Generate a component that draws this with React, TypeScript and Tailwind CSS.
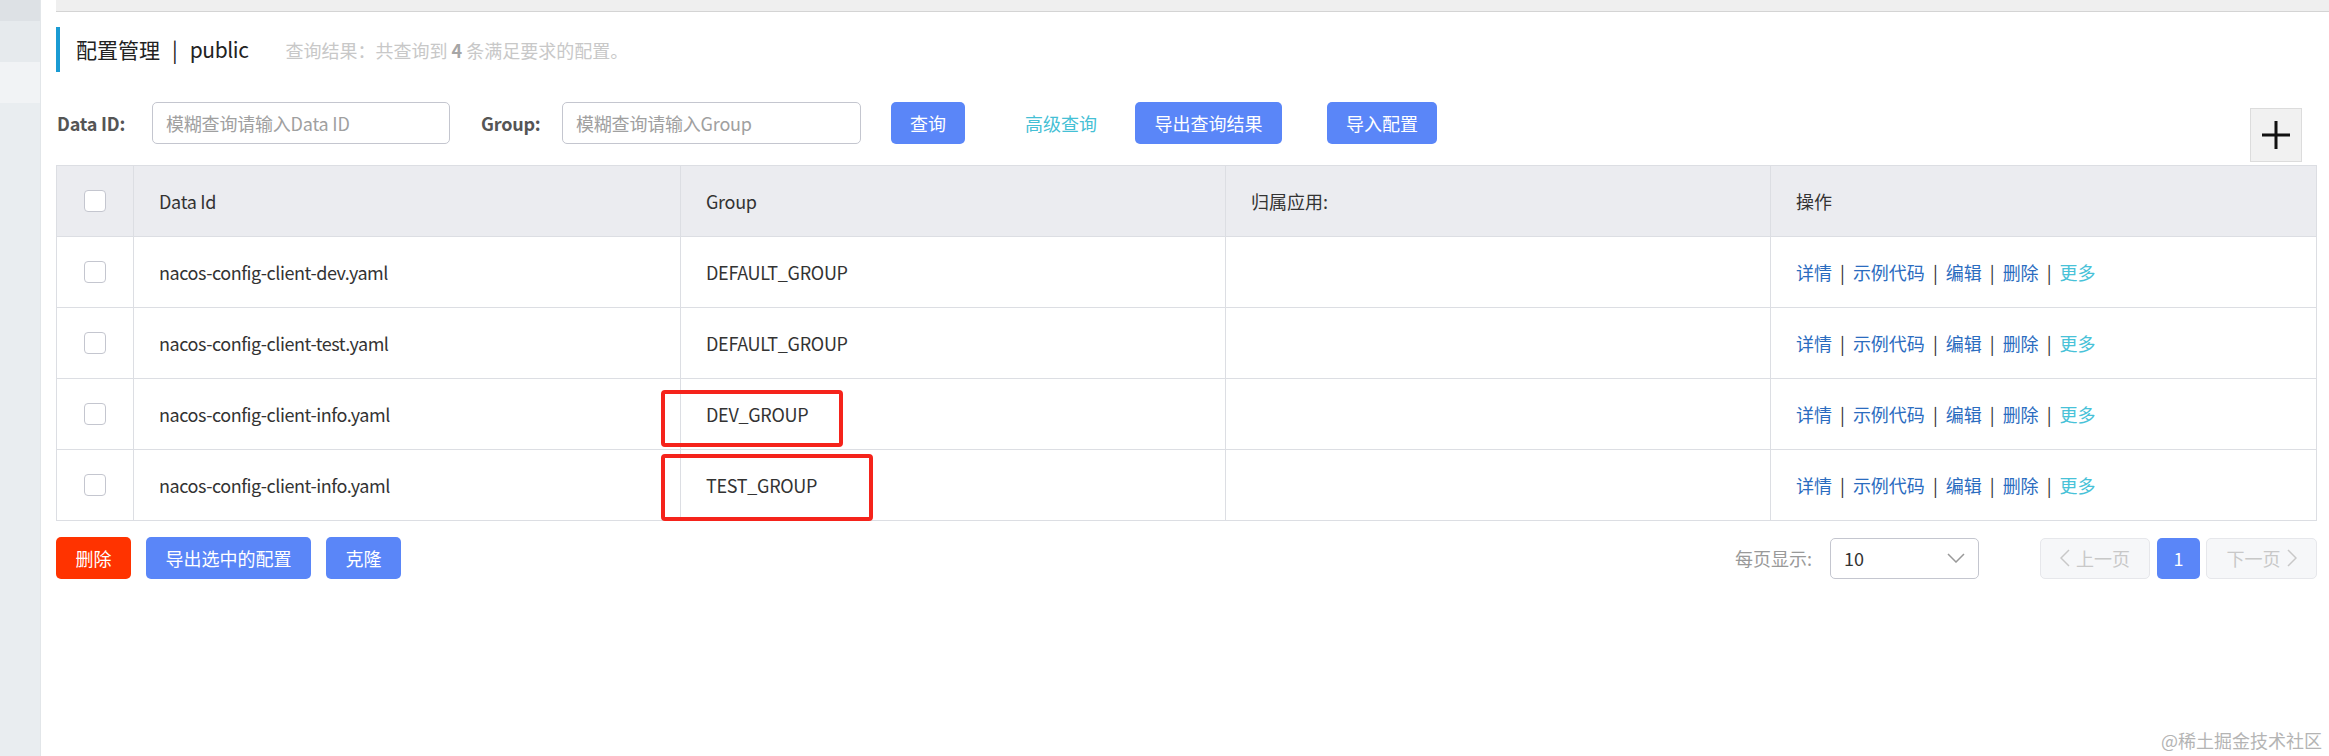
import React from 'react';

const rows = [
  { id: 'nacos-config-client-dev.yaml', group: 'DEFAULT_GROUP' },
  { id: 'nacos-config-client-test.yaml', group: 'DEFAULT_GROUP' },
  { id: 'nacos-config-client-info.yaml', group: 'DEV_GROUP' },
  { id: 'nacos-config-client-info.yaml', group: 'TEST_GROUP' },
];

const Checkbox: React.FC = () => (
  <span className="block w-[22px] h-[22px] rounded-[4px] border border-[#c4c6cf] bg-white"></span>
);

const BlueButton: React.FC<{ children: React.ReactNode; className?: string }> = ({ children, className = '' }) => (
  <button className={`h-[42px] rounded-[5px] bg-[#5a86f8] text-white text-[18px] leading-none flex items-center justify-center ${className}`}>
    {children}
  </button>
);

const Actions: React.FC = () => (
  <div className="flex items-center text-[18px]">
    <span className="text-[#2b6cbf]">详情</span>
    <span className="mx-[8px] text-[#333]">|</span>
    <span className="text-[#2b6cbf]">示例代码</span>
    <span className="mx-[8px] text-[#333]">|</span>
    <span className="text-[#2b6cbf]">编辑</span>
    <span className="mx-[8px] text-[#333]">|</span>
    <span className="text-[#2b6cbf]">删除</span>
    <span className="mx-[8px] text-[#333]">|</span>
    <span className="text-[#48c2d8]">更多</span>
  </div>
);

export default function App() {
  return (
    <div className="relative flex w-full h-[756px] bg-white overflow-hidden font-['Noto_Sans_CJK_SC','Noto_Sans',sans-serif] text-[#333]">
      {/* sidebar */}
      <aside className="w-[41px] shrink-0 flex flex-col bg-[#e9edf0] border-r border-[#e2e6e9]">
        <div className="h-[21px] bg-[#dde1e5]"></div>
        <div className="h-[41px] bg-[#e6eaed]"></div>
        <div className="h-[41px] bg-[#f1f3f5]"></div>
      </aside>

      <main className="flex-1 ml-[15px] flex flex-col">
        <div className="h-[12px] bg-[#efefef] border-b border-[#d4d4d4]"></div>

        <div className="pr-[12px] flex flex-col">
          {/* title */}
          <div className="mt-[15px] h-[45px] border-l-4 border-[#1a9bd3] pl-[16px] flex items-center">
            <span className="text-[21px] text-[#222] leading-none">配置管理</span>
            <span className="text-[21px] text-[#222] leading-none mx-[12px]">|</span>
            <span className="text-[21px] text-[#222] leading-none tracking-[-0.4px]">public</span>
            <span className="ml-[37px] text-[18px] text-[#c8c8c8] leading-none">
              查询结果：共查询到 <b className="text-[#a6a6a6]">4</b> 条满足要求的配置。
            </span>
          </div>

          {/* search row */}
          <div className="mt-[30px] flex items-start">
            <label className="w-[77px] ml-[1px] h-[42px] flex items-center text-[18px] font-bold text-[#555] tracking-[-0.2px]">Data ID:</label>
            <div className="ml-[18px] w-[298px] h-[42px] border border-[#c4c6cf] rounded-[5px] px-[13px] flex items-center text-[18px] text-[#a0a0a0] tracking-[-0.2px]">
              模糊查询请输入Data ID
            </div>
            <label className="ml-[31px] w-[60px] h-[42px] flex items-center text-[18px] font-bold text-[#555] tracking-[-0.2px]">Group:</label>
            <div className="ml-[21px] w-[299px] h-[42px] border border-[#c4c6cf] rounded-[5px] px-[13px] flex items-center text-[18px] text-[#a0a0a0] tracking-[-0.2px]">
              模糊查询请输入Group
            </div>
            <BlueButton className="ml-[30px] w-[74px]">查询</BlueButton>
            <span className="ml-[60px] w-[72px] h-[42px] flex items-center text-[18px] text-[#45c0d5]">高级查询</span>
            <BlueButton className="ml-[38px] w-[147px]">导出查询结果</BlueButton>
            <BlueButton className="ml-[45px] w-[110px]">导入配置</BlueButton>
            <button className="ml-auto mr-[15px] mt-[6px] w-[52px] h-[54px] bg-[#f1f1f1] border border-[#dcdcdc] flex items-center justify-center">
              <svg width="30" height="30" viewBox="0 0 30 30">
                <path d="M15 1v28M1 15h28" stroke="#111" strokeWidth="3" fill="none" />
              </svg>
            </button>
          </div>

          {/* table */}
          <div className="relative mt-[3px] border-l border-r border-t border-[#dcdee3]">
            <div className="grid grid-cols-[76px_547px_545px_545px_1fr] h-[71px] bg-[#ebecf0] border-b border-[#dcdee3] text-[18px]">
              <div className="flex items-center justify-center"><Checkbox /></div>
              <div className="border-l border-[#dcdee3] pl-[25px] flex items-center tracking-[-0.3px]">Data Id</div>
              <div className="border-l border-[#dcdee3] pl-[25px] flex items-center tracking-[-0.3px]">Group</div>
              <div className="border-l border-[#dcdee3] pl-[25px] flex items-center">归属应用:</div>
              <div className="border-l border-[#dcdee3] pl-[25px] flex items-center">操作</div>
            </div>
            {rows.map((r, i) => (
              <div key={i} className="grid grid-cols-[76px_547px_545px_545px_1fr] h-[71px] border-b border-[#dcdee3] text-[18px]">
                <div className="flex items-center justify-center"><Checkbox /></div>
                <div className="border-l border-[#dcdee3] pl-[25px] flex items-center tracking-[-0.45px]">{r.id}</div>
                <div className="border-l border-[#dcdee3] pl-[25px] flex items-center tracking-[-0.3px]">{r.group}</div>
                <div className="border-l border-[#dcdee3]"></div>
                <div className="border-l border-[#dcdee3] pl-[25px] flex items-center"><Actions /></div>
              </div>
            ))}

            {/* red annotation boxes */}
            <div className="absolute left-[604px] top-[224px] w-[182px] h-[57px] border-[4px] border-[#f5231b] rounded-[4px]"></div>
            <div className="absolute left-[604px] top-[288px] w-[212px] h-[67px] border-[4px] border-[#f5231b] rounded-[4px]"></div>
          </div>

          {/* footer row */}
          <div className="mt-[16px] flex items-center">
            <button className="w-[75px] h-[42px] rounded-[5px] bg-[#ff3300] text-white text-[18px] leading-none">删除</button>
            <BlueButton className="ml-[15px] w-[165px]">导出选中的配置</BlueButton>
            <BlueButton className="ml-[15px] w-[75px]">克隆</BlueButton>

            <span className="ml-auto text-[18px] text-[#999]">每页显示:</span>
            <div className="ml-[18px] w-[149px] h-[41px] border border-[#c4c6cf] rounded-[5px] pl-[13px] pr-[13px] flex items-center justify-between">
              <span className="text-[18px] text-[#333]">10</span>
              <svg width="18" height="10" viewBox="0 0 18 10">
                <path d="M1 1l8 8 8-8" stroke="#999" strokeWidth="1.5" fill="none" />
              </svg>
            </div>
            <div className="ml-[61px] w-[110px] h-[41px] border border-[#e6e7eb] bg-[#f6f7f9] rounded-[5px] flex items-center justify-center gap-[6px] text-[18px] text-[#c8c8c8]">
              <svg width="10" height="18" viewBox="0 0 10 18">
                <path d="M9 1L1 9l8 8" stroke="#c8c8c8" strokeWidth="1.5" fill="none" />
              </svg>
              <span>上一页</span>
            </div>
            <div className="ml-[7px] w-[43px] h-[41px] rounded-[5px] bg-[#5a86f8] text-white text-[18px] flex items-center justify-center">1</div>
            <div className="ml-[6px] w-[111px] h-[41px] border border-[#e6e7eb] bg-[#f6f7f9] rounded-[5px] flex items-center justify-center gap-[6px] text-[18px] text-[#c8c8c8]">
              <span>下一页</span>
              <svg width="10" height="18" viewBox="0 0 10 18">
                <path d="M1 1l8 8-8 8" stroke="#c8c8c8" strokeWidth="1.5" fill="none" />
              </svg>
            </div>
          </div>
        </div>
      </main>

      <span className="absolute right-[7px] bottom-[2px] text-[18px] text-[#b4b4b4]">@稀土掘金技术社区</span>
    </div>
  );
}
